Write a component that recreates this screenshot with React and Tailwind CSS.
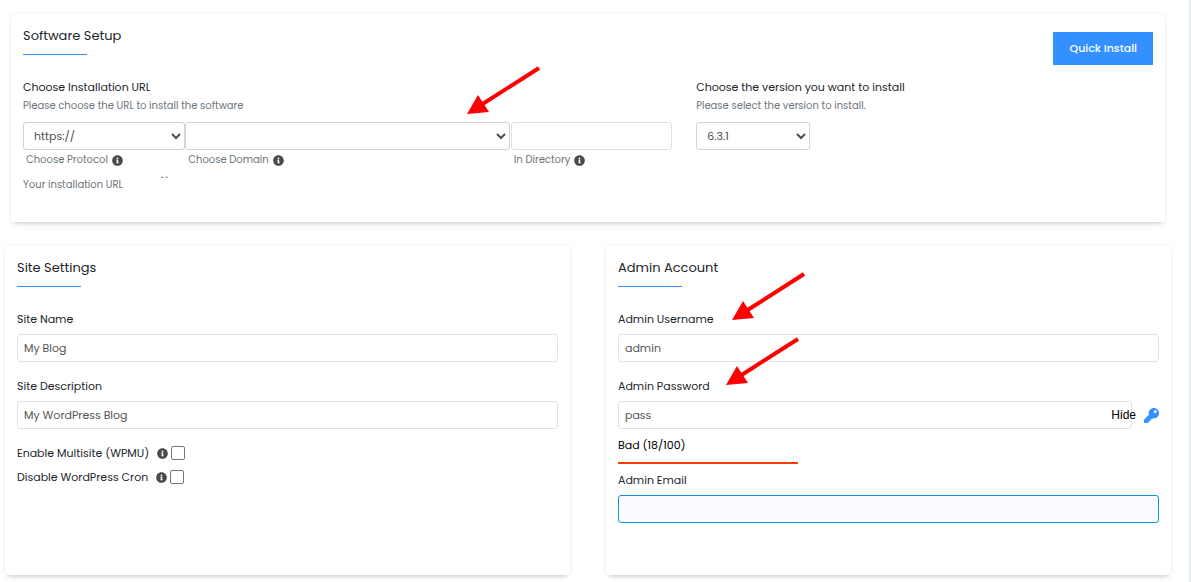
import React, { useState } from "react";
import { FaInfoCircle, FaKey } from "react-icons/fa";

const inputClass =
  "block h-7 w-full rounded-[3px] border border-[#e2e2e2] bg-white px-1.5 text-[11px] text-[#555555] outline-none";
const selectClass =
  "block h-7 w-full rounded-[3px] border border-[#ced4da] bg-white pl-1.5 text-[11px] text-[#495057] outline-none";

const Card = ({ title, action, className, children }) => (
  <section
    className={`rounded bg-white px-3 pt-3 shadow-[0_5px_5px_-3px_rgba(0,0,0,0.15),0_0_4px_rgba(0,0,0,0.08)] ${className}`}
  >
    <div className="flex items-start justify-between">
      <div>
        <h2 className="mb-2 text-[13px] leading-5">{title}</h2>
        <div className="h-px w-16 bg-[#3390ff]" />
      </div>
      {action}
    </div>
    {children}
  </section>
);

const Arrow = ({ className }) => (
  <svg
    className={`pointer-events-none absolute ${className}`}
    width="74"
    height="50"
    viewBox="0 0 74 50"
    aria-hidden="true"
  >
    <path d="M14 39 72 2" stroke="#ff0000" strokeWidth="4" />
    <path d="M0 48 11 29 22 46Z" fill="#ff0000" />
  </svg>
);

const Info = () => <FaInfoCircle className="size-[11px] shrink-0 text-[#4a4a4a]" />;

const Hint = ({ htmlFor, children }) => (
  <label htmlFor={htmlFor} className="flex items-center gap-1 pl-[3px] text-[10px] leading-5 text-[#6c757d]">
    {children}
    <Info />
  </label>
);

const Field = ({ id, label, arrow, children }) => (
  <div>
    <div className="relative mb-[7px] leading-4">
      <label htmlFor={id}>{label}</label>
      {arrow}
    </div>
    {children}
  </div>
);

const Check = ({ id, label }) => (
  <div className="flex h-6 items-center">
    <label htmlFor={id} className="mr-2">
      {label}
    </label>
    <Info />
    <input
      id={id}
      type="checkbox"
      className="ml-[3px] size-3.5 appearance-none rounded-[2px] border border-[#767676] bg-white checked:bg-[#3390ff]"
    />
  </div>
);

const SoftwareSetup = () => (
  <Card
    title="Software Setup"
    className="mx-1.5 pb-[26px]"
    action={
      <button type="button" className="mt-1.5 h-[33px] bg-[#3390ff] px-4 font-medium text-white">
        Quick Install
      </button>
    }
  >
    <div className="mt-3.5 grid grid-cols-12 gap-x-6">
      <div className="relative col-span-7">
        <h3 className="leading-4">Choose Installation URL</h3>
        <p className="mb-[5px] text-[10px] leading-[22px] text-[#6c757d]">
          Please choose the URL to install the software
        </p>
        <div className="grid grid-cols-4">
          <div>
            <select id="protocol" className={selectClass} defaultValue="https://">
              <option>https://</option>
              <option>http://</option>
            </select>
            <Hint htmlFor="protocol">Choose Protocol</Hint>
          </div>
          <div className="col-span-2">
            <select id="domain" className={selectClass}>
              <option value=""></option>
            </select>
            <Hint htmlFor="domain">Choose Domain</Hint>
          </div>
          <div className="pl-px">
            <input id="directory" type="text" className={inputClass} />
            <Hint htmlFor="directory">In Directory</Hint>
          </div>
        </div>
        <div className="mt-1 flex items-start text-[10px] leading-[22px] text-[#6c757d]">
          <span className="w-[138px]">Your installation URL</span>
          <span className="leading-[2px] text-[#212529]">. .</span>
        </div>
        <Arrow className="left-[444px] -top-[13px]" />
      </div>

      <div className="col-span-5">
        <label htmlFor="version" className="block leading-4">
          Choose the version you want to install
        </label>
        <p className="mb-[5px] text-[10px] leading-[22px] text-[#6c757d]">Please select the version to install.</p>
        <div className="w-[114px]">
          <select id="version" className={selectClass} defaultValue="6.3.1">
            <option>6.3.1</option>
          </select>
        </div>
      </div>
    </div>
  </Card>
);

const SiteSettings = () => (
  <Card title="Site Settings">
    <div className="mt-6 space-y-4">
      <Field id="siteName" label="Site Name">
        <input id="siteName" type="text" defaultValue="My Blog" className={inputClass} />
      </Field>
      <Field id="siteDesc" label="Site Description">
        <input id="siteDesc" type="text" defaultValue="My WordPress Blog" className={inputClass} />
      </Field>
    </div>
    <div className="mt-3">
      <Check id="multisite" label="Enable Multisite (WPMU)" />
      <Check id="cron" label="Disable WordPress Cron" />
    </div>
  </Card>
);

const AdminAccount = () => {
  const [visible, setVisible] = useState(true);

  return (
    <Card title="Admin Account" className="pb-[52px]">
      <div className="mt-6 space-y-4">
        <Field id="username" label="Admin Username" arrow={<Arrow className="left-[114px] -top-[39px]" />}>
          <input id="username" type="text" defaultValue="admin" className={inputClass} />
        </Field>
        <Field id="password" label="Admin Password" arrow={<Arrow className="left-[108px] -top-[41px]" />}>
          <div className="flex items-center gap-3">
            <div className="relative flex-1">
              <input
                id="password"
                type={visible ? "text" : "password"}
                defaultValue="pass"
                className={inputClass}
              />
              {/* the toggle hangs over the right edge of the box */}
              <button
                type="button"
                onClick={() => setVisible(!visible)}
                className="absolute -right-1 top-1.5 font-['Liberation_Sans',sans-serif] text-[12px] leading-4 text-black"
              >
                {visible ? "Hide" : "Show"}
              </button>
            </div>
            <button type="button" aria-label="Generate password" className="text-[#3390ff]">
              <FaKey className="size-[15px]" />
            </button>
          </div>
        </Field>
      </div>
      <div className="mt-2 leading-4 text-black">Bad (18/100)</div>
      <div className="mt-[9px] mb-2 h-0.5 w-[180px] bg-[#ff3c00]" />
      <Field id="email" label="Admin Email">
        <input
          id="email"
          type="email"
          className="block h-7 w-full rounded-[3px] border border-[#0a94d6] bg-[#fafcff] px-1.5 text-[11px] outline-none"
        />
      </Field>
    </Card>
  );
};

export default function App() {
  return (
    <main className="min-h-screen border-r-2 border-[#e9eef2] bg-white pt-3.5 pr-[18px] pb-[7px] pl-[5px] font-[Poppins,Inter,sans-serif] text-[11px] text-[#212529]">
      <SoftwareSetup />
      <div className="mt-6 grid grid-cols-2 gap-9">
        <SiteSettings />
        <AdminAccount />
      </div>
    </main>
  );
}
